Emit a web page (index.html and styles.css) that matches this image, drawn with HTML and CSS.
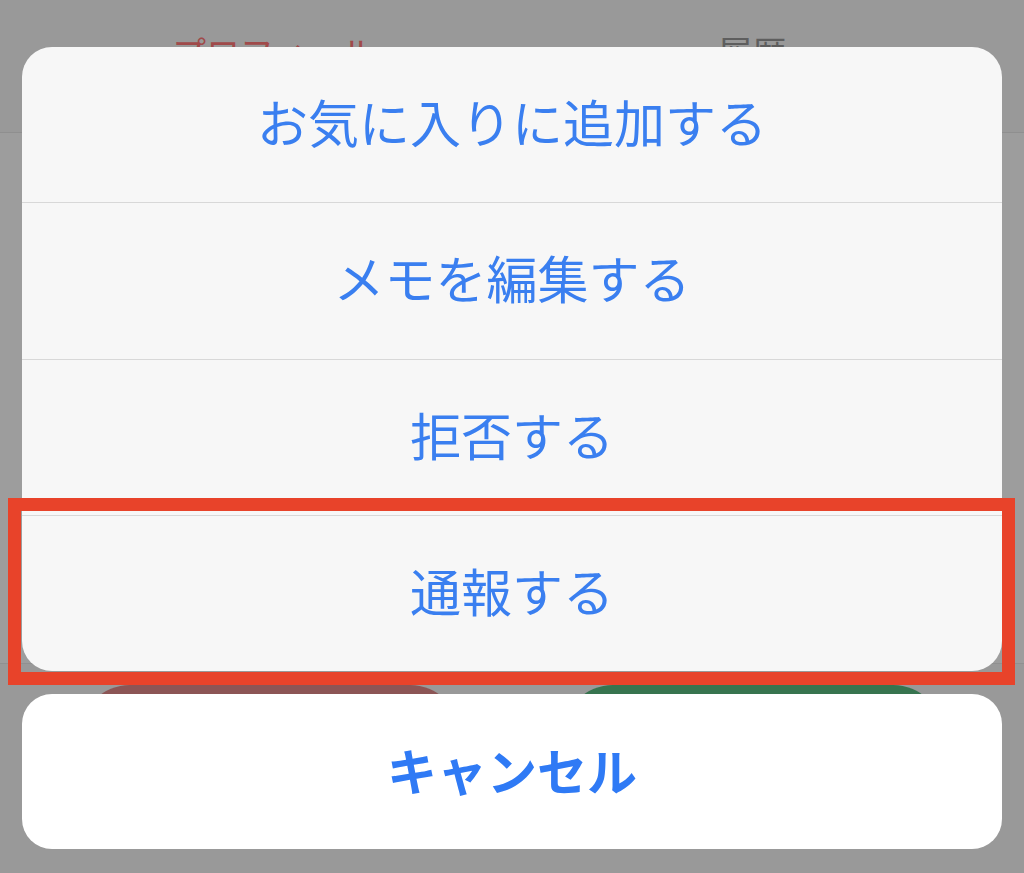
FILE: index.html
```html
<!DOCTYPE html>
<html lang="ja">
<head>
<meta charset="utf-8">
<title>Action sheet</title>
<link rel="stylesheet" href="styles.css">
</head>
<body>
<div class="app">
  <header class="tabs">
    <span class="tab tab-active">プロフィール</span>
    <span class="tab">履歴</span>
  </header>
  <main class="content"></main>
  <footer class="actions">
    <div class="pill pill-red"></div>
    <div class="pill pill-green"></div>
  </footer>
</div>

<div class="sheet">
  <div class="group">
    <div class="item">お気に入りに追加する</div>
    <div class="item">メモを編集する</div>
    <div class="item">拒否する</div>
    <div class="item">通報する</div>
  </div>
  <div class="cancel">キャンセル</div>
</div>

<div class="highlight"></div>
</body>
</html>
```

FILE: styles.css
```css
html, body {
  margin: 0;
  padding: 0;
}

body {
  width: 1024px;
  height: 873px;
  overflow: hidden;
  position: relative;
  background: #9a9a9a;
  font-family: "Noto Sans CJK JP", "Noto Sans", sans-serif;
}

.app {
  display: flex;
  flex-direction: column;
  height: 873px;
}

.tabs {
  height: 133px;
  box-sizing: border-box;
  display: flex;
  align-items: flex-start;
  gap: 343px;
  padding: 30px 0 0 172px;
  background: #999999;
  border-bottom: 1px solid #8f8f8f;
}

.tab {
  font-size: 34px;
  line-height: 1.3;
  color: #5e5e5e;
}

.tab-active {
  color: #a04a4a;
}

.content {
  flex: 1;
  background: #9d9d9d;
}

.actions {
  height: 210px;
  display: flex;
  gap: 103px;
  padding: 21px 0 0 80px;
  box-sizing: border-box;
  background: #999999;
  border-top: 1px solid #909090;
}

.pill {
  width: 380px;
  height: 100px;
  border-radius: 50px;
}

.pill-red {
  background: #8c5555;
}

.pill-green {
  background: #37744f;
}

.sheet {
  position: absolute;
  top: 47px;
  left: 22px;
  width: 980px;
  display: flex;
  flex-direction: column;
  gap: 23px;
}

.group {
  background: #f7f7f7;
  border-radius: 30px;
  overflow: hidden;
}

.item {
  height: 155px;
  box-sizing: content-box;
  display: flex;
  align-items: center;
  justify-content: center;
  font-size: 51px;
  color: #3a7ff0;
  border-top: 1px solid #d8d8d8;
}

.item > * {
  margin: 0;
}

.item {
  height: 147px;
  padding-bottom: 8px;
}

.item:first-child {
  border-top: none;
}

.item:nth-child(2) {
  height: 148px;
}

.cancel {
  height: 155px;
  background: #ffffff;
  border-radius: 30px;
  display: flex;
  align-items: center;
  justify-content: center;
  font-size: 50px;
  font-weight: 700;
  color: #2f7af5;
  box-sizing: border-box;
  padding-bottom: 6px;
}

.highlight {
  position: absolute;
  top: 498px;
  left: 8px;
  width: 981px;
  height: 161px;
  border: 13px solid #e8432a;
}
```
